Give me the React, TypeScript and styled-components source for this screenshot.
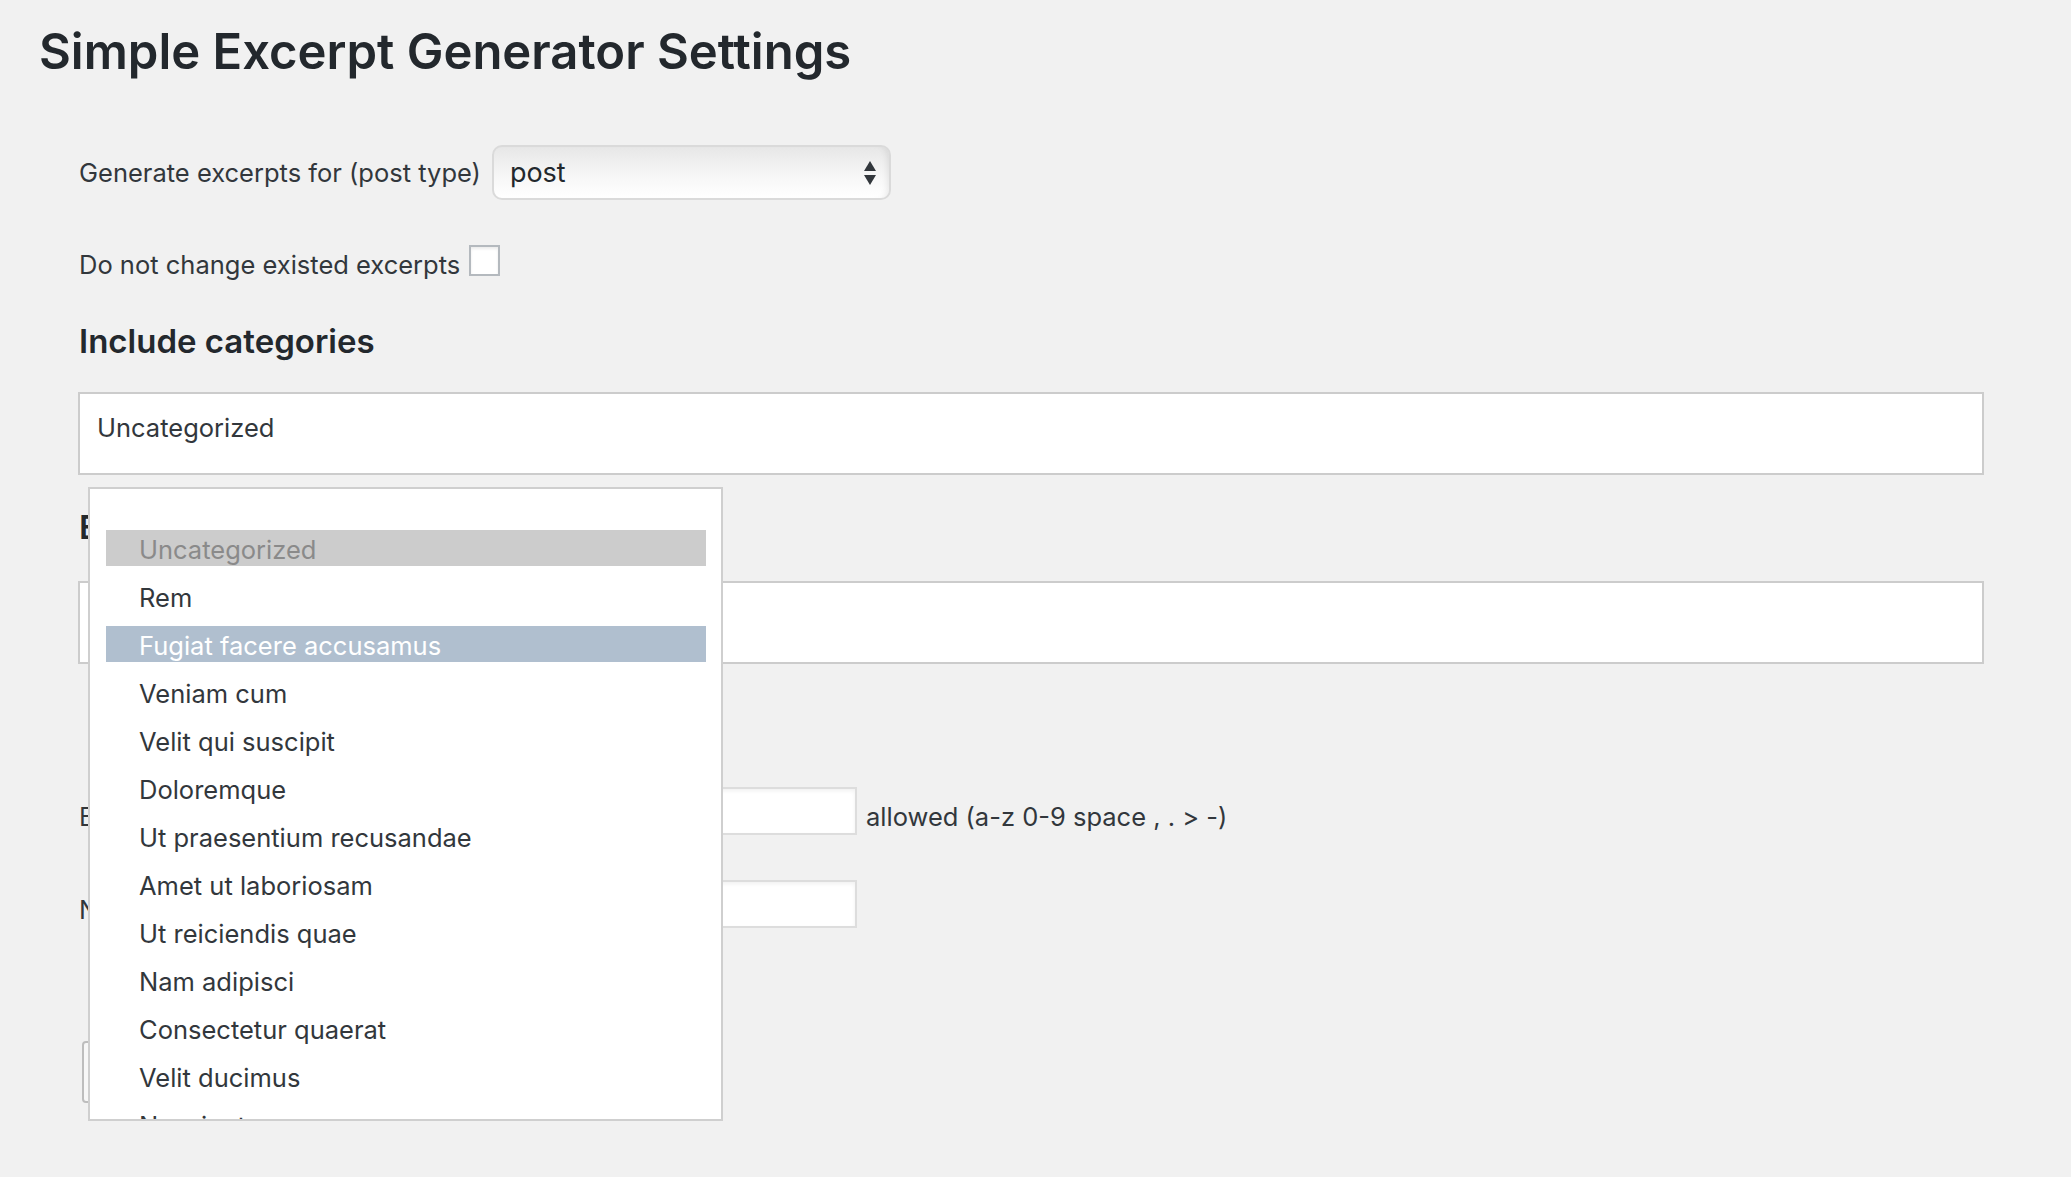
import React from "react";
import styled, { createGlobalStyle } from "styled-components";

const GlobalStyle = createGlobalStyle`
  html, body { margin: 0; padding: 0; background: #f1f1f1; }
  body { font-family: Inter, "Liberation Sans", Arial, sans-serif; color: #32373c; }
  * { box-sizing: border-box; }
`;

const Page = styled.div`
  position: relative;
  width: 2071px;
  height: 1177px;
  overflow: hidden;
  padding: 22px 0 0 39px;
`;

const Title = styled.h1`
  margin: 0;
  font-size: 49px;
  font-weight: 600;
  line-height: 60px;
  color: #23282d;
  letter-spacing: 0;
`;

const Form = styled.div`
  margin: 63px 0 0 40px;
  width: 1905px;
  display: flex;
  flex-direction: column;
`;

const FieldRow = styled.div<{ $top: number; $align: string }>`
  display: flex;
  align-items: ${(p) => p.$align};
  margin-top: ${(p) => p.$top}px;
`;

const Label = styled.span<{ $pad?: number; $lh?: number }>`
  font-size: 25.5px;
  line-height: ${(p) => p.$lh ?? 36}px;
  padding-top: ${(p) => p.$pad ?? 0}px;
  color: #32373c;
  white-space: nowrap;
`;

const FixedLabel = styled(Label)`
  width: 470px;
  flex: none;
`;

const SelectBox = styled.div`
  position: relative;
  margin-left: 11px;
  width: 399px;
  height: 55px;
  border: 2px solid #dadada;
  border-radius: 10px;
  background: linear-gradient(#e7e7e7, #f6f6f6 55%, #ffffff);
  box-shadow: inset -6px 0 6px -4px rgba(0, 0, 0, 0.08);
  display: flex;
  align-items: center;
  padding: 0 0 0 16px;
  font-size: 27px;
  color: #23282d;
`;

const Arrows = styled.svg`
  position: absolute;
  right: 12px;
  top: 13px;
`;

const Checkbox = styled.span`
  display: block;
  width: 31px;
  height: 31px;
  margin-left: 9px;
  border: 2px solid #b4b9be;
  background: #fff;
  box-shadow: inset 0 2px 3px rgba(0, 0, 0, 0.08);
`;

const SectionHeading = styled.h2<{ $top: number }>`
  margin: ${(p) => p.$top}px 0 0;
  font-size: 33px;
  font-weight: 600;
  line-height: 40px;
  color: #23282d;
`;

const ListBox = styled.div<{ $top: number }>`
  margin: ${(p) => p.$top}px 0 0 -1px;
  height: 83px;
  width: 1906px;
  border: 2px solid #cccccc;
  background: #fff;
  padding: 16px 17px 0;
  font-size: 25.5px;
  line-height: 36px;
  color: #32373c;
`;

const TextInput = styled.span`
  display: block;
  width: 308px;
  height: 48px;
  border: 2px solid #dddddd;
  background: #fff;
  box-shadow: inset 0 2px 4px rgba(0, 0, 0, 0.06);
  flex: none;
`;

const Hint = styled(Label)`
  margin-left: 9px;
`;

const SaveButton = styled.button`
  margin: 113px 0 0 3px;
  width: 270px;
  height: 62px;
  border: 2px solid #bdbdbd;
  border-radius: 4px;
  background: #f7f7f7;
  font-family: inherit;
  font-size: 25.5px;
  color: #555;
  text-align: center;
  align-self: flex-start;
`;

const Dropdown = styled.div`
  position: absolute;
  left: 88px;
  top: 487px;
  width: 635px;
  height: 634px;
  border: 2px solid #cfcfcf;
  background: #fff;
  overflow: hidden;
  padding: 41px 15px 0 16px;
  display: flex;
  flex-direction: column;
  gap: 12px;
`;

const Option = styled.div<{ $state: "disabled" | "selected" | "normal" }>`
  flex: none;
  height: 36px;
  line-height: 39px;
  padding-left: 33px;
  font-size: 25.5px;
  white-space: nowrap;
  background: ${(p) =>
    p.$state === "disabled" ? "#cccccc" : p.$state === "selected" ? "#b0bfcf" : "transparent"};
  color: ${(p) =>
    p.$state === "disabled" ? "#8a8a8a" : p.$state === "selected" ? "#ffffff" : "#32373c"};
`;

const options: { label: string; state: "disabled" | "selected" | "normal" }[] = [
  { label: "Uncategorized", state: "disabled" },
  { label: "Rem", state: "normal" },
  { label: "Fugiat facere accusamus", state: "selected" },
  { label: "Veniam cum", state: "normal" },
  { label: "Velit qui suscipit", state: "normal" },
  { label: "Doloremque", state: "normal" },
  { label: "Ut praesentium recusandae", state: "normal" },
  { label: "Amet ut laboriosam", state: "normal" },
  { label: "Ut reiciendis quae", state: "normal" },
  { label: "Nam adipisci", state: "normal" },
  { label: "Consectetur quaerat", state: "normal" },
  { label: "Velit ducimus", state: "normal" },
  { label: "Nesciunt", state: "normal" },
];

export default function App() {
  return (
    <>
      <GlobalStyle />
      <Page>
        <Title>Simple Excerpt Generator Settings</Title>
        <Form>
          <FieldRow $top={0} $align="center">
            <Label>Generate excerpts for (post type)</Label>
            <SelectBox>
              post
              <Arrows width="14" height="28" viewBox="0 0 14 28">
                <polygon points="7,1 13,11 1,11" fill="#32373c" />
                <polygon points="1,15 13,15 7,25" fill="#32373c" />
              </Arrows>
            </SelectBox>
          </FieldRow>
          <FieldRow $top={45} $align="flex-start">
            <Label $pad={4} $lh={31}>Do not change existed excerpts</Label>
            <Checkbox />
          </FieldRow>
          <SectionHeading $top={41}>Include categories</SectionHeading>
          <ListBox $top={31}>Uncategorized</ListBox>
          <SectionHeading $top={32}>Exclude categories</SectionHeading>
          <ListBox $top={34} />
          <FieldRow $top={123} $align="flex-end">
            <FixedLabel>Excerpt ending</FixedLabel>
            <TextInput />
            <Hint>allowed (a-z 0-9 space , . &gt; -)</Hint>
          </FieldRow>
          <FieldRow $top={45} $align="flex-end">
            <FixedLabel>Number of words</FixedLabel>
            <TextInput />
          </FieldRow>
          <SaveButton>Save Changes</SaveButton>
        </Form>
        <Dropdown>
          {options.map((o) => (
            <Option key={o.label} $state={o.state}>
              {o.label}
            </Option>
          ))}
        </Dropdown>
      </Page>
    </>
  );
}
